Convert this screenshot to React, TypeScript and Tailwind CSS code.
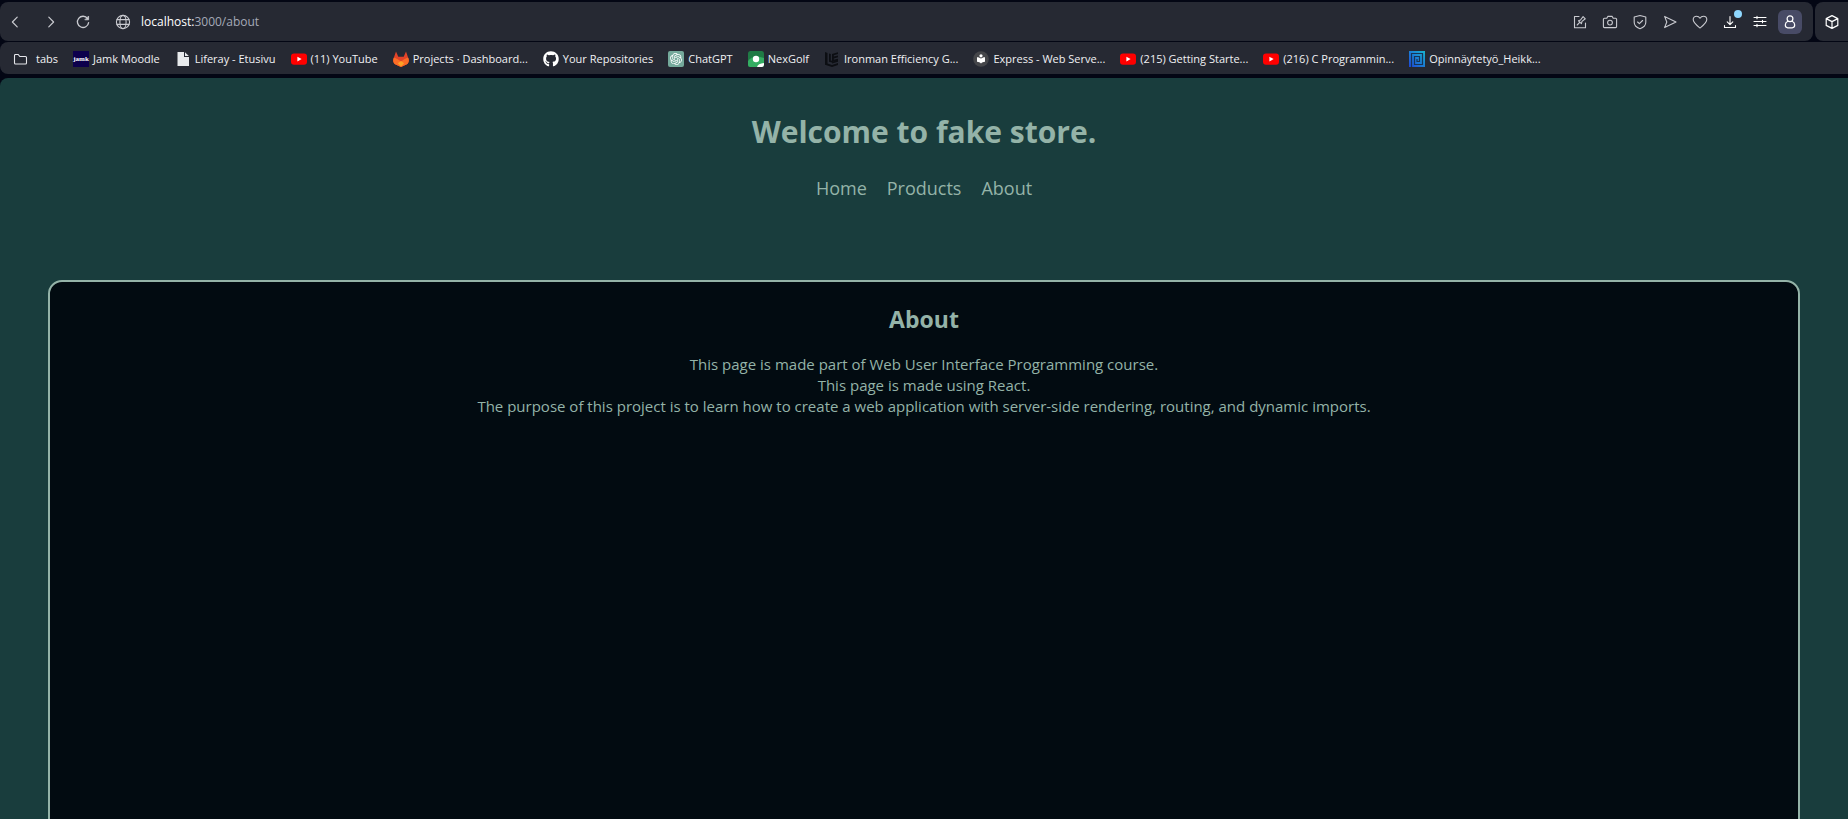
import type { ReactNode } from "react";
import { FaGithub } from "react-icons/fa";
import { SiOpenai } from "react-icons/si";

function Line({ children, size = 16, width = 1.2 }: { children: ReactNode; size?: number; width?: number }) {
  return (
    <svg width={size} height={size} viewBox="0 0 16 16" fill="none" stroke="currentColor" strokeWidth={width} strokeLinecap="round" strokeLinejoin="round" aria-hidden="true">
      {children}
    </svg>
  );
}

const BackIcon = () => <Line><path d="M10.2 3.2 5.4 8l4.8 4.8" /></Line>;
const ForwardIcon = () => <Line><path d="M5.8 3.2 10.6 8l-4.8 4.8" /></Line>;
const ReloadIcon = () => (
  <Line width={1.3}>
    <path d="M12.6 4.6A5.6 5.6 0 1 0 13.6 8.6" />
    <path d="M13.6 2.4v3.4h-3.4z" fill="currentColor" strokeWidth={0.8} />
  </Line>
);
const GlobeIcon = () => (
  <Line width={1.1}>
    <circle cx="8" cy="8" r="6.6" />
    <ellipse cx="8" cy="8" rx="3.1" ry="6.6" />
    <path d="M2 5.6h12M2 10.4h12" />
  </Line>
);
const EditIcon = () => (
  <Line width={1.1}>
    <path d="M7 2.500H2.500v11.200h11V9" />
    <path d="M5.200 11 7.700 8.400M6.500 6.800l2.900 2.900.6-2.300 3.300-2.600-2.200-2.200-2.600 3.400z" />
  </Line>
);
const CameraIcon = () => (
  <Line width={1.1}>
    <path d="M4.800 4.200 5.800 2.400h4.400l1 1.800h2.400c.6 0 1 .4 1 1v7.400c0 .6-.4 1-1 1H2.400c-.6 0-1-.4-1-1V5.200c0-.6.4-1 1-1z" />
    <circle cx="8" cy="8.600" r="2.400" />
  </Line>
);
const ShieldIcon = () => (
  <Line width={1.1}>
    <path d="M8 1.500 13.800 3v5.300c0 3.200-2.300 5.200-5.800 6.400-3.500-1.200-5.800-3.200-5.800-6.400V3z" />
    <path d="m5.600 8 1.800 1.700 3.200-3.200" />
  </Line>
);
const SendIcon = () => <Line width={1.1}><path d="M2.600 2.400 14 8 2.600 13.600 4.800 8z" /></Line>;
const HeartIcon = () => (
  <Line width={1.1}><path d="M8 14C4.600 11.400 1.200 9 1.200 5.600c0-2 1.500-3.400 3.300-3.400C6 2.200 7.300 3 8 4.200c.7-1.200 2-2 3.500-2 1.800 0 3.300 1.400 3.300 3.400C14.800 9 11.400 11.400 8 14z" /></Line>
);
const DownloadIcon = () => (
  <Line width={1.1}><path d="M8 2.500v8M5.200 7.900 8 10.600l2.800-2.700M2.500 11.500v2h11v-2" /></Line>
);
const SettingsIcon = () => (
  <Line width={1.1}><path d="M2 3.500h12M2 7.500h12M2 11.500h12M5 2.200v2.600M10.500 6.200v2.600M5 10.200v2.600" /></Line>
);
const PersonIcon = () => (
  <Line width={1.2}>
    <circle cx="8" cy="4.800" r="2.900" />
    <path d="M5.800 7.200c-1.500.7-2.500 2-2.500 3.900 0 1.900.9 2.700 2.500 2.700h4.400c1.600 0 2.500-.8 2.500-2.700 0-1.900-1-3.200-2.500-3.900" />
  </Line>
);
const CubeIcon = () => (
  <Line width={1.2}><path d="M8 1.600 13.800 4.600v6.800L8 14.400l-5.800-3V4.600zM2.200 4.600 8 7.600l5.800-3M8 7.600v6.800" /></Line>
);

function Fav({ children }: { children: ReactNode }) {
  return (
    <svg width="16" height="16" viewBox="0 0 16 16" className="shrink-0" aria-hidden="true">
      {children}
    </svg>
  );
}

const FolderFav = () => (
  <Fav><path d="M2.500 3.500h3.700l1.600 2h5.700c.6 0 1 .4 1 1v5.500c0 .6-.4 1-1 1h-10c-.6 0-1-.4-1-1v-7.500c0-.6.400-1 1-1z" fill="none" stroke="#e4e5ea" strokeWidth="1.100" /></Fav>
);
const JamkFav = () => (
  <span className="flex size-4 shrink-0 items-center justify-center bg-[#0d004c] font-['Liberation_Serif',serif] text-[7px] leading-none font-bold text-white" aria-hidden="true">jamk</span>
);
const FileFav = () => (
  <Fav>
    <path d="M2.500 1H9v5h5v9H2.500z" fill="#e8eaed" />
    <path d="M10 1.200 13.800 5H10z" fill="#e8eaed" />
  </Fav>
);
const YoutubeFav = () => (
  <Fav>
    <rect y="2.400" width="16" height="11.400" rx="3" fill="#ff0000" />
    <path d="M6.400 5.700v4.800L10.600 8.100z" fill="#fff" />
  </Fav>
);
const GitlabFav = () => (
  <Fav>
    <path d="M3 .6 5.300 5.800h5.400L13 .6l2.600 7.400c.6 2 0 4-1.600 5.200L8 16l-6-2.800C.4 12-.2 10 .4 8z" fill="#e24329" />
    <path d="M.4 8 .7 6.800C3 7.200 4.600 8 5.800 9l2.200 1.600L10.200 9c1.200-1 2.800-1.800 5.100-2.200l.3 1.200c.6 2 0 4-1.600 5.200L8 16l-6-2.800C.4 12-.2 10 .4 8z" fill="#fc6d26" />
    <path d="M4.800 12.200 8 10l3.200 2.200L8 15.400z" fill="#fca326" />
  </Fav>
);
const GithubFav = () => <FaGithub className="size-4 shrink-0 text-white" aria-hidden="true" />;
const ChatFav = () => (
  <span className="flex size-4 shrink-0 items-center justify-center rounded-xs bg-[#74a99b] text-white" aria-hidden="true">
    <SiOpenai className="size-3" />
  </span>
);
const GolfFav = () => (
  <Fav>
    <rect width="16" height="16" rx="2.500" fill="#1f7a45" />
    <path d="M0 10C3 5.500 8 4.500 16 7v6.500a2.500 2.500 0 0 1-2.500 2.500h-11A2.500 2.500 0 0 1 0 13.500z" fill="#34ad62" />
    <circle cx="8" cy="8" r="3.200" fill="#fff" />
    <path d="M9 16c.5-2.500 3-3.500 7-4v1.500a2.500 2.500 0 0 1-2.500 2.500z" fill="#fff" />
  </Fav>
);
const IronFav = () => (
  <Fav>
    <path d="M1 1 3.500 2v10.500L8 14l6-2v2L8 16l-7-2.300z" fill="#0c0e13" />
    <path d="M5 2.500 6.800 3v6.500l2 .6v1.700L5 10.800zM8 3l6-1.700V3L9.800 4.200v1.300L14 4.600v1.700L9.800 7.400v1.400L14 7.800v3L8 12.600v-1.800l4.200-1.200-4.200.9z" fill="#0c0e13" />
  </Fav>
);
const ExpressFav = () => (
  <Fav>
    <circle cx="8" cy="8" r="7.800" fill="#45464a" />
    <circle cx="8" cy="4.800" r="1.600" fill="#fff" />
    <path d="M4 6.300c1.800 0 3 .5 4 1.500 1-1 2.200-1.500 4-1.500v4.500c-1.800.1-3 .6-4 1.700-1-1.100-2.200-1.600-4-1.700z" fill="#fff" />
  </Fav>
);
const SpiralFav = () => (
  <Fav>
    <defs>
      <linearGradient id="spiral" x1="0" y1="1" x2="1" y2="0">
        <stop offset="0" stopColor="#1d46d8" />
        <stop offset="1" stopColor="#19b5cf" />
      </linearGradient>
    </defs>
    <rect width="16" height="16" fill="url(#spiral)" />
    <path d="M2.500 16V2.500h11v11h-8v-8h5v5H8V8" fill="none" stroke="#173455" strokeWidth="1.200" />
  </Fav>
);

const bookmarks: { label: string; icon: () => ReactNode }[] = [
  { label: "Jamk Moodle", icon: JamkFav },
  { label: "Liferay - Etusivu", icon: FileFav },
  { label: "(11) YouTube", icon: YoutubeFav },
  { label: "Projects · Dashboard...", icon: GitlabFav },
  { label: "Your Repositories", icon: GithubFav },
  { label: "ChatGPT", icon: ChatFav },
  { label: "NexGolf", icon: GolfFav },
  { label: "Ironman Efficiency G...", icon: IronFav },
  { label: "Express - Web Serve...", icon: ExpressFav },
  { label: "(215) Getting Starte...", icon: YoutubeFav },
  { label: "(216) C Programmin...", icon: YoutubeFav },
  { label: "Opinnäytetyö_Heikk...", icon: SpiralFav },
];

const actions: { label: string; icon: () => ReactNode }[] = [
  { label: "Edit", icon: EditIcon },
  { label: "Snapshot", icon: CameraIcon },
  { label: "Protection", icon: ShieldIcon },
  { label: "Send", icon: SendIcon },
  { label: "Favourites", icon: HeartIcon },
];

const iconButton = "relative flex size-6 items-center justify-center rounded-md";

function Toolbar() {
  return (
    <div className="flex h-[39px] gap-0.5">
      <div className="flex flex-1 items-center rounded-lg bg-[#262933] pr-[11px] pl-[3px] text-[#c9cad0]">
        <button type="button" aria-label="Back" className={iconButton}><BackIcon /></button>
        <button type="button" aria-label="Forward" className="ml-3 flex size-6 items-center justify-center"><ForwardIcon /></button>
        <button type="button" aria-label="Reload" className="ml-2 flex size-6 items-center justify-center"><ReloadIcon /></button>
        <button type="button" aria-label="Site information" className="ml-4 flex size-6 items-center justify-center"><GlobeIcon /></button>
        <a href="#address" className="ml-1.5 text-[12px] leading-4 text-[#a5a9b8]">
          <span className="text-white">localhost:</span>3000/about
        </a>
        <div className="ml-auto flex gap-1.5">
          {actions.map(({ label, icon: Icon }) => (
            <button key={label} type="button" aria-label={label} className={iconButton}><Icon /></button>
          ))}
          <button type="button" aria-label="Downloads" className="relative flex size-6 items-center justify-center text-white">
            <DownloadIcon />
            <span className="absolute top-0 right-0 size-2 rounded-full bg-[#8fd8ff]" />
          </button>
          <button type="button" aria-label="Settings" className="flex size-6 items-center justify-center text-white"><SettingsIcon /></button>
          <button type="button" aria-label="Profile" className="flex size-6 items-center justify-center rounded-md bg-[#484b66] text-white"><PersonIcon /></button>
        </div>
      </div>
      <div className="flex w-[33px] items-center justify-center rounded-l-lg bg-[#262933] text-white">
        <button type="button" aria-label="Extensions" className="flex size-6 items-center justify-center"><CubeIcon /></button>
      </div>
    </div>
  );
}

function Bookmarks() {
  return (
    <nav aria-label="Bookmarks" className="flex h-8 items-center gap-[15px] overflow-hidden rounded-l-lg bg-[#262933] pt-0.5 pl-3 text-[11px] leading-4 whitespace-nowrap text-[#f1f1f4]">
      <a href="#tabs" className="flex items-center gap-2"><FolderFav />tabs</a>
      {bookmarks.map(({ label, icon: Icon }) => (
        <a key={label} href="#bookmark" className="flex items-center gap-1"><Icon />{label}</a>
      ))}
    </nav>
  );
}

export default function App() {
  return (
    <div className="flex h-screen flex-col overflow-hidden bg-[#030614] pt-0.5 font-['Open_Sans','Noto_Sans',sans-serif]">
      <header className="flex flex-col gap-px">
        <Toolbar />
        <Bookmarks />
      </header>
      <div className="mt-1 flex-1 overflow-hidden rounded-tl-lg bg-[#193d3d] text-center text-[#94b3a8]">
        <h1 className="pt-8 text-[30px] leading-[44px] font-bold">Welcome to fake store.</h1>
        <nav aria-label="Main" className="mt-5 flex justify-center gap-5 text-[18px] leading-[28px]">
          <a href="#home">Home</a>
          <a href="#products">Products</a>
          <a href="#about">About</a>
        </nav>
        <main className="mx-12 mt-[78px] min-h-[600px] rounded-[14px] border-2 border-[#94b3a8] bg-[#020b11] pt-5">
          <h2 className="text-[23px] leading-[34px] font-bold">About</h2>
          <p className="mt-[18px] text-[15px] leading-[21px]">
            This page is made part of Web User Interface Programming course.
            <br />
            This page is made using React.
            <br />
            The purpose of this project is to learn how to create a web application with server-side rendering, routing, and dynamic imports.
          </p>
        </main>
      </div>
    </div>
  );
}
